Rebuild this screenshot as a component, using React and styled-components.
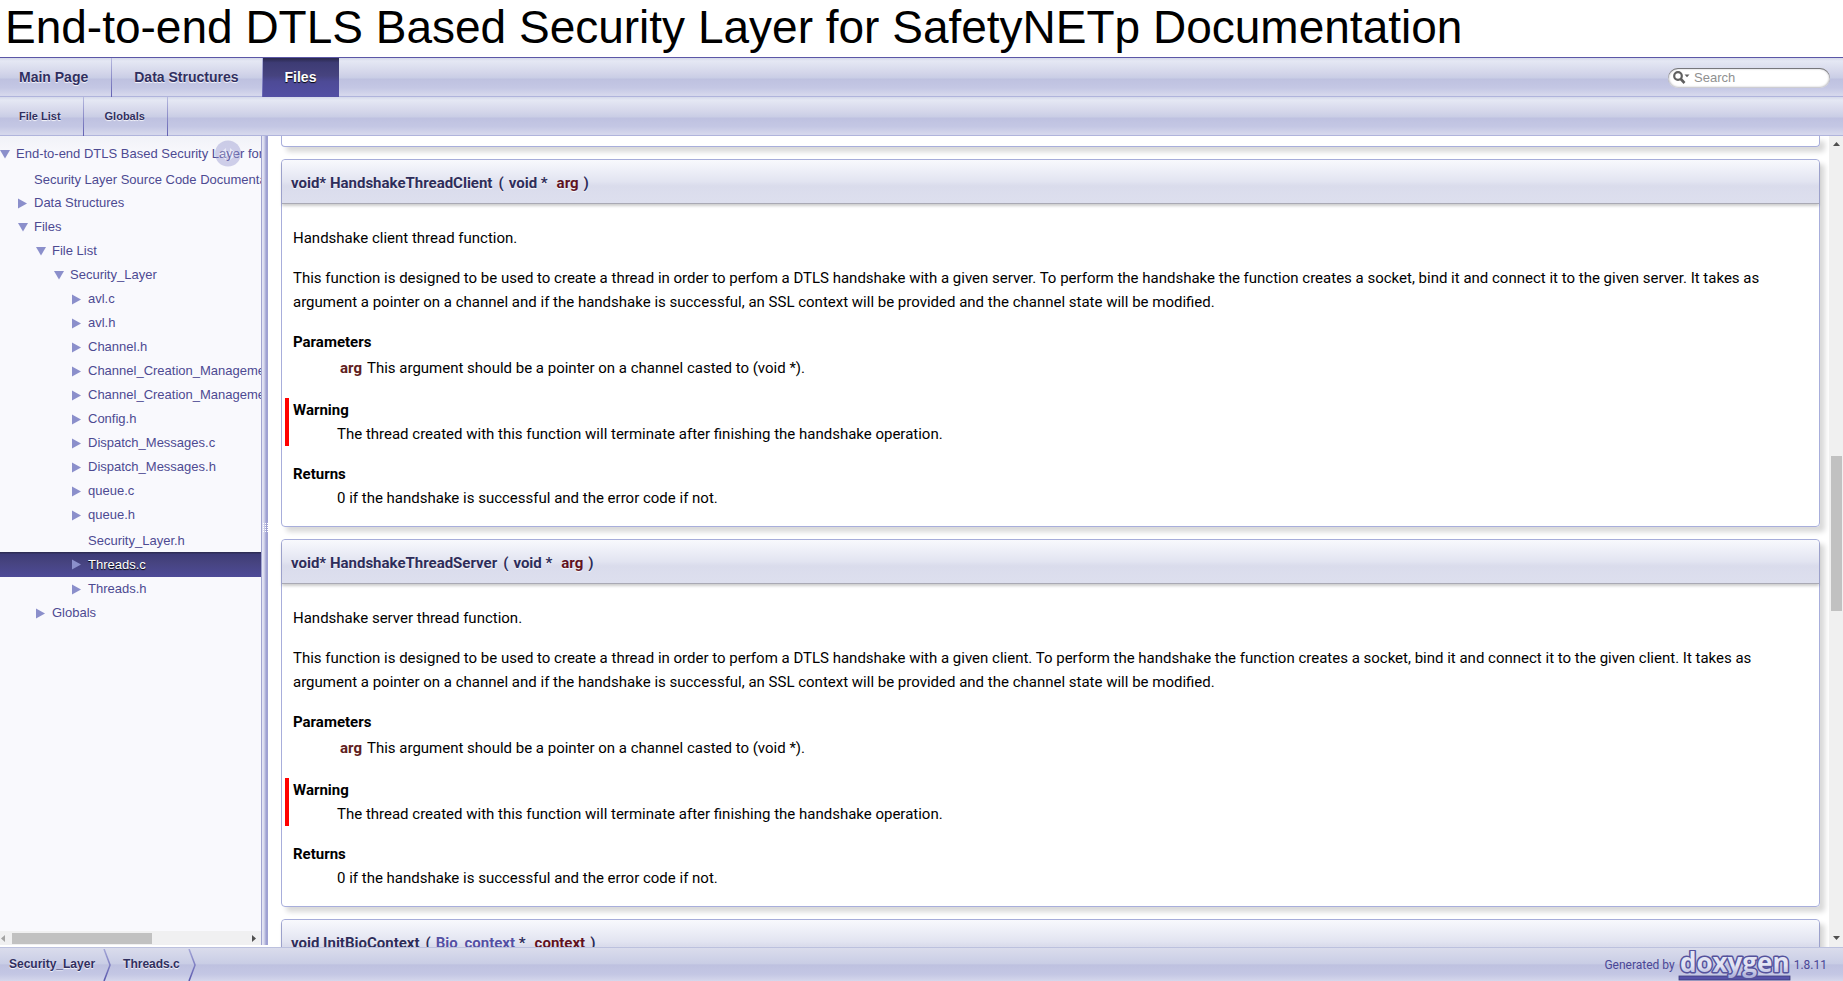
import React from "react";
import styled, { createGlobalStyle, css } from "styled-components";

const sans = '"Liberation Sans", Arial, sans-serif';
const roboto = 'Roboto, "Liberation Sans", sans-serif';

const GlobalStyle = createGlobalStyle`
  *, *::before, *::after { box-sizing: border-box; }
  body { margin: 0; background: #fff; color: #000; font: 400 15px/24px ${roboto}; }
  ul, ol, dl, dd, p, h1, h2 { margin: 0; padding: 0; list-style: none; }
  a { color: inherit; text-decoration: none; }
`;

const barFill = css`
  background: linear-gradient(#d5d9ea 0, #e5e8f4 8%, #d4d6ea 38%, #c9cde5 53%, #bec1e0 55%, #c4c7e4 78%, #d5d7ec 97%, #d5d7ec 100%);
`;

const Page = styled.div`
  display: flex;
  flex-direction: column;
  height: 100vh;
  overflow: hidden;
`;

const Header = styled.header`
  padding: 0 5px 2px;
  border-bottom: 1px solid #5b57a6;
`;

const Title = styled.h1`
  font: 400 46px/55px ${sans};
  white-space: nowrap;
`;

const TabBar = styled.nav`
  display: flex;
  justify-content: space-between;
  align-items: center;
  height: 39px;
  padding-right: 13px;
  border-bottom: 1px solid #b0b4dc;
  ${barFill}
`;

const TabList = styled.ul`
  display: flex;
  align-self: stretch;
  margin-bottom: -1px;
`;

const Tab = styled.a`
  display: block;
  height: 39px;
  padding: 0 ${(p) => (p.$small ? "22px 0 21px" : "23px 0 22px")};
  border-right: 1px solid;
  border-image: linear-gradient(#b9bce0, #5f5db0) 1;
  font: 700 ${(p) => (p.$small ? 11 : 14)}px/38px ${sans};
  color: #302f5f;
  text-shadow: 0 1px 1px rgba(255, 255, 255, 0.9);
  li:first-child > & { padding-left: 19px; }
  ${(p) => p.$active && css`
    border-right: 0;
    color: #fff;
    text-shadow: 0 1px 1px #000;
    background: linear-gradient(#2a294c 0, #3d3b74 12%, #46437f 45%, #4d4a96 60%, #534fa4 100%);
  `}
`;

const SearchBox = styled.form`
  display: flex;
  align-items: center;
  width: 162px;
  height: 20px;
  margin-top: 2px;
  padding: 0 8px 0 5px;
  border-radius: 10px;
  background: #fff;
  box-shadow: inset 0 1px 0 #77777c, inset 0 0 2px 1px #bcbcc2;
`;

const SearchInput = styled.input`
  flex: 1;
  min-width: 0;
  height: 18px;
  margin-left: 4px;
  padding: 0;
  border: 0;
  outline: 0;
  background: transparent;
  font: 400 13px/18px ${sans};
  &::placeholder { color: #909090; opacity: 1; }
`;

const Main = styled.div`
  flex: 1;
  display: flex;
  min-height: 0;
`;

const SideNav = styled.aside`
  position: relative;
  display: flex;
  flex-direction: column;
  width: 261px;
  margin-bottom: 2px;
  overflow: hidden;
  background: linear-gradient(#f1f2f8, #f9f9fd 20px);
`;

const Tree = styled.ul`
  flex: 1;
  padding-top: 6px;
`;

const TreeRow = styled.a`
  display: flex;
  align-items: center;
  height: ${(p) => (p.$leaf ? 25 : 24)}px;
  padding-top: ${(p) => (p.$leaf ? 2 : 0)}px;
  padding-left: ${(p) => p.$depth * 18}px;
  font: 400 13px/20px ${sans};
  white-space: nowrap;
  color: #4d4a92;
  ${(p) => p.$active && css`
    height: 25px;
    color: #fff;
    text-shadow: 0 1px 1px #000;
    background: linear-gradient(#2a294c 0, #3d3b78 10%, #46437f 40%, #4e4b98 100%);
  `}
`;

const ArrowCell = styled.span`
  display: flex;
  flex: none;
  width: 16px;
`;

const SyncButton = styled.button`
  position: absolute;
  top: 4px;
  right: 20px;
  width: 26px;
  height: 27px;
  padding: 0;
  border: 0;
  background: none;
  opacity: 0.4;
`;

const HScroll = styled.div`
  display: flex;
  align-items: center;
  gap: 7px;
  height: 14px;
  padding: 0 5px 0 1px;
  background: #f0f0f1;
`;

const HTrack = styled.div`
  display: flex;
  flex: 1;
  height: 11px;
  &::before { content: ""; width: 60%; background: #c1c1c1; }
`;

const Splitter = styled.div`
  display: flex;
  align-items: center;
  width: 7px;
  margin-bottom: 2px;
  padding-bottom: 26px;
  background: linear-gradient(90deg, #a0a3d0 0 1px, #e3e4f3 1px 2px, #dcddef 2px 3px, #c9cbe6 3px 4px, #b0b2da 4px 5px, #9fa1d2 5px);
`;

const Docs = styled.main`
  flex: 1;
  display: flex;
  flex-direction: column;
  gap: 12px;
  min-width: 0;
  padding: 0 9px 0 13px;
  overflow: hidden;
`;

const Card = styled.section`
  flex: none;
  border: 1px solid #a8aedb;
  border-radius: 4px;
  box-shadow: 5px 5px 5px rgba(0, 0, 0, 0.15);
`;

const CardTail = styled(Card)`
  height: 11px;
  border-top: 0;
  border-radius: 0 0 4px 4px;
`;

const Proto = styled.h2`
  display: flex;
  height: 44px;
  padding: 0 9px;
  border-bottom: 1px solid #a9a9b4;
  border-radius: 4px 4px 0 0;
  box-shadow: 0 2px 3px rgba(0, 0, 0, 0.2);
  background: linear-gradient(#f8f9fd 0, #e2e4f1 50%, #dadcec 60%, #dddfee 100%);
  font: 700 15px/46px ${roboto};
  white-space: pre;
  color: #2e2d5a;
  text-shadow: 0 1px 1px rgba(255, 255, 255, 0.9);
`;

const ProtoPart = styled.span`
  padding-left: ${(p) => p.$gap || 0}px;
`;

const ProtoLink = styled.a`
  color: #5350a4;
`;

const Arg = styled.span`
  font-weight: 700;
  color: #602020;
`;

const ProtoArg = styled(Arg)`
  padding-left: 9px;
  color: #60121f;
`;

const CardBody = styled.div`
  display: flex;
  flex-direction: column;
  gap: 16px;
  padding: 22px 11px 16px;
`;

const Term = styled.dt`
  font-weight: 700;
`;

const Detail = styled.dd`
  padding-left: 44px;
`;

const Warning = styled.dl`
  margin-left: -8px;
  padding-left: 4px;
  border-left: 4px solid #f00;
`;

const Params = styled.table`
  margin: 2px 0 2px 46px;
  border-collapse: collapse;
  td, th { padding: 0 4px 0 1px; }
  th { text-align: left; }
`;

const VScroll = styled.div`
  display: flex;
  flex-direction: column;
  align-items: center;
  width: 14px;
  padding: 6px 0 7px;
  background: #f0f0f0;
`;

const VSegment = styled.div`
  width: 11px;
  flex: ${(p) => p.$size} 1 0;
  background: ${(p) => (p.$thumb ? "#c1c1c1" : "transparent")};
`;

const Footer = styled.footer`
  display: flex;
  justify-content: space-between;
  align-items: flex-start;
  height: 34px;
  padding-right: 16px;
  border-top: 1px solid #bcc1de;
  background: linear-gradient(#dadcec 0, #c9cde5 48%, #bec1e0 51%, #c4c7e4 80%, #d5d7ec 100%);
`;

const Crumbs = styled.ol`
  display: flex;
`;

const Crumb = styled.li`
  display: flex;
  padding-left: ${(p) => (p.$first ? 9 : 11)}px;
  font: 700 12px/32px ${sans};
  color: #302f5f;
  text-shadow: 0 1px 1px rgba(255, 255, 255, 0.9);
  svg { margin: 1px 0 0 8px; }
`;

const Credit = styled.p`
  display: flex;
  gap: 3px;
  font: 400 12px/34px ${roboto};
  color: #4a4796;
`;

const LogoLink = styled.a`
  display: flex;
  padding-top: 2px;
`;

const TREE = [
  [0, "End-to-end DTLS Based Security Layer for SafetyNETp", "open"],
  [1, "Security Layer Source Code Documentation", "leaf"],
  [1, "Data Structures", "closed"],
  [1, "Files", "open"],
  [2, "File List", "open"],
  [3, "Security_Layer", "open"],
  [4, "avl.c", "closed"],
  [4, "avl.h", "closed"],
  [4, "Channel.h", "closed"],
  [4, "Channel_Creation_Management.c", "closed"],
  [4, "Channel_Creation_Management.h", "closed"],
  [4, "Config.h", "closed"],
  [4, "Dispatch_Messages.c", "closed"],
  [4, "Dispatch_Messages.h", "closed"],
  [4, "queue.c", "closed"],
  [4, "queue.h", "closed"],
  [4, "Security_Layer.h", "leaf"],
  [4, "Threads.c", "closed"],
  [4, "Threads.h", "closed"],
  [2, "Globals", "closed"],
];

const TreeArrow = ({ state }) => (
  <ArrowCell>
    {state !== "leaf" && (
      <svg width="11" height="11" viewBox="0 0 11 11" aria-hidden="true">
        <path d={state === "open" ? "M0 1H10L5 9.5Z" : "M0 0.5L9 5.5L0 10.5Z"} fill="#8b8fcb" />
      </svg>
    )}
  </ArrowCell>
);

const Triangle = ({ d, color = "#505050", w = 7, h = 4 }) => (
  <svg width={w} height={h} viewBox={`0 0 ${w} ${h}`} aria-hidden="true">
    <path d={d} fill={color} />
  </svg>
);

const SearchIcon = () => (
  <svg width="17" height="14" viewBox="0 0 17 14" aria-hidden="true">
    <circle cx="5" cy="5" r="3.8" fill="none" stroke="#5f5f5f" strokeWidth="2.2" />
    <path d="M7.8 8L11.5 12" stroke="#5f5f5f" strokeWidth="2.6" />
    <path d="M11.5 3.5H16.5L14 6.2Z" fill="#5f5f5f" />
  </svg>
);

const SyncIcon = () => (
  <svg width="26" height="27" viewBox="0 0 26 27" aria-hidden="true">
    <circle cx="13" cy="13.5" r="13" fill="#8f90cc" />
    <path d="M4 14L11 8V12H12V16H11V20Z M22 14L15 8V12H14V16H15V20Z" fill="#d5d6ef" />
  </svg>
);

const CrumbChevron = () => (
  <svg width="9" height="32" viewBox="0 0 9 32" aria-hidden="true">
    <defs>
      <linearGradient id="chevron" x1="0" y1="0" x2="0" y2="1">
        <stop offset="0" stopColor="#a3a6d6" />
        <stop offset="1" stopColor="#5a58ad" />
      </linearGradient>
    </defs>
    <path d="M2 0L8 16L2 32" transform="translate(-1.3 0)" fill="none" stroke="#e6e7f5" strokeWidth="1" />
    <path d="M1 0L7 16L1 32" fill="none" stroke="url(#chevron)" strokeWidth="1.6" />
  </svg>
);

const DoxygenLogo = () => (
  <svg width="113" height="31" viewBox="0 0 113 31" role="img" aria-label="doxygen">
    <defs>
      <linearGradient id="logoFill" x1="0" y1="0" x2="0" y2="1">
        <stop offset="0.2" stopColor="#e4e6f4" />
        <stop offset="0.6" stopColor="#e2e4f3" />
        <stop offset="1" stopColor="#9fa2d3" />
      </linearGradient>
    </defs>
    <rect x="1" y="26" width="111" height="4" fill="#5854aa" stroke="#3d3a7b" strokeWidth="0.8" />
    <text
      x="2"
      y="22"
      fontFamily='"Open Sans", sans-serif'
      fontWeight="700"
      fontSize="26"
      fill="url(#logoFill)"
      stroke="#55539c"
      strokeWidth="3"
      strokeLinejoin="round"
      paintOrder="stroke"
    >
      doxygen
    </text>
  </svg>
);

const FunctionDoc = ({ name, peer }) => (
  <Card>
    <Proto>
      <ProtoPart>void* {name}</ProtoPart>
      <ProtoPart $gap={6}>(</ProtoPart>
      <ProtoPart $gap={5}>void *</ProtoPart>
      <ProtoArg>arg</ProtoArg>
      <ProtoPart $gap={5}>)</ProtoPart>
    </Proto>
    <CardBody>
      <p>{`Handshake ${peer} thread function.`}</p>
      <p>
        {`This function is designed to be used to create a thread in order to perfom a DTLS handshake with a given ${
          peer === "client" ? "server" : "client"
        }. To perform the handshake the function creates a socket, bind it and connect it to the given ${
          peer === "client" ? "server" : "client"
        }. It takes as argument a pointer on a channel and if the handshake is successful, an SSL context will be provided and the channel state will be modified.`}
      </p>
      <dl>
        <Term>Parameters</Term>
        <dd>
          <Params>
            <tbody>
              <tr>
                <th scope="row"><Arg>arg</Arg></th>
                <td>This argument should be a pointer on a channel casted to (void *).</td>
              </tr>
            </tbody>
          </Params>
        </dd>
      </dl>
      <Warning>
        <Term>Warning</Term>
        <Detail>The thread created with this function will terminate after finishing the handshake operation.</Detail>
      </Warning>
      <dl>
        <Term>Returns</Term>
        <Detail>0 if the handshake is successful and the error code if not.</Detail>
      </dl>
    </CardBody>
  </Card>
);

export default function App() {
  return (
    <Page>
      <GlobalStyle />
      <Header>
        <Title>End-to-end DTLS Based Security Layer for SafetyNETp Documentation</Title>
      </Header>
      <TabBar>
        <TabList>
          <li><Tab href="#main">Main Page</Tab></li>
          <li><Tab href="#data">Data Structures</Tab></li>
          <li><Tab href="#files" $active>Files</Tab></li>
        </TabList>
        <SearchBox>
          <SearchIcon />
          <SearchInput type="text" placeholder="Search" aria-label="Search" />
        </SearchBox>
      </TabBar>
      <TabBar>
        <TabList>
          <li><Tab href="#list" $small>File List</Tab></li>
          <li><Tab href="#globals" $small>Globals</Tab></li>
        </TabList>
      </TabBar>
      <Main>
        <SideNav>
          <Tree>
            {TREE.map(([depth, label, state]) => (
              <li key={label}>
                <TreeRow href="#tree" $depth={depth} $leaf={state === "leaf"} $active={label === "Threads.c"}>
                  <TreeArrow state={state} />
                  {label}
                </TreeRow>
              </li>
            ))}
          </Tree>
          <SyncButton type="button" aria-label="Toggle panel synchronisation"><SyncIcon /></SyncButton>
          <HScroll>
            <Triangle w={4} h={7} d="M4 0V7L0 3.5Z" color="#a3a3a3" />
            <HTrack />
            <Triangle w={4} h={7} d="M0 0V7L4 3.5Z" />
          </HScroll>
        </SideNav>
        <Splitter>
          <svg width="7" height="9" viewBox="0 0 7 9" aria-hidden="true">
            <path d="M2.5 0V9M4.5 0V9M6.5 0V9" stroke="#fff" strokeWidth="1" strokeDasharray="1 1" />
          </svg>
        </Splitter>
        <Docs>
          <CardTail as="div" />
          <FunctionDoc name="HandshakeThreadClient" peer="client" />
          <FunctionDoc name="HandshakeThreadServer" peer="server" />
          <Card>
            <Proto>
              <ProtoPart>void InitBioContext</ProtoPart>
              <ProtoPart $gap={6}>(</ProtoPart>
              <ProtoPart $gap={5}><ProtoLink href="#bio">Bio_context</ProtoLink> *</ProtoPart>
              <ProtoArg>context</ProtoArg>
              <ProtoPart $gap={5}>)</ProtoPart>
            </Proto>
          </Card>
        </Docs>
        <VScroll>
          <Triangle d="M0 4H7L3.5 0Z" />
          <VSegment $size={308} />
          <VSegment $size={155} $thumb />
          <VSegment $size={323} />
          <Triangle d="M0 0H7L3.5 4Z" />
        </VScroll>
      </Main>
      <Footer>
        <Crumbs>
          <Crumb $first><a href="#layer">Security_Layer</a><CrumbChevron /></Crumb>
          <Crumb><a href="#threads">Threads.c</a><CrumbChevron /></Crumb>
        </Crumbs>
        <Credit>
          Generated by
          <LogoLink href="#doxygen"><DoxygenLogo /></LogoLink>
          1.8.11
        </Credit>
      </Footer>
    </Page>
  );
}
